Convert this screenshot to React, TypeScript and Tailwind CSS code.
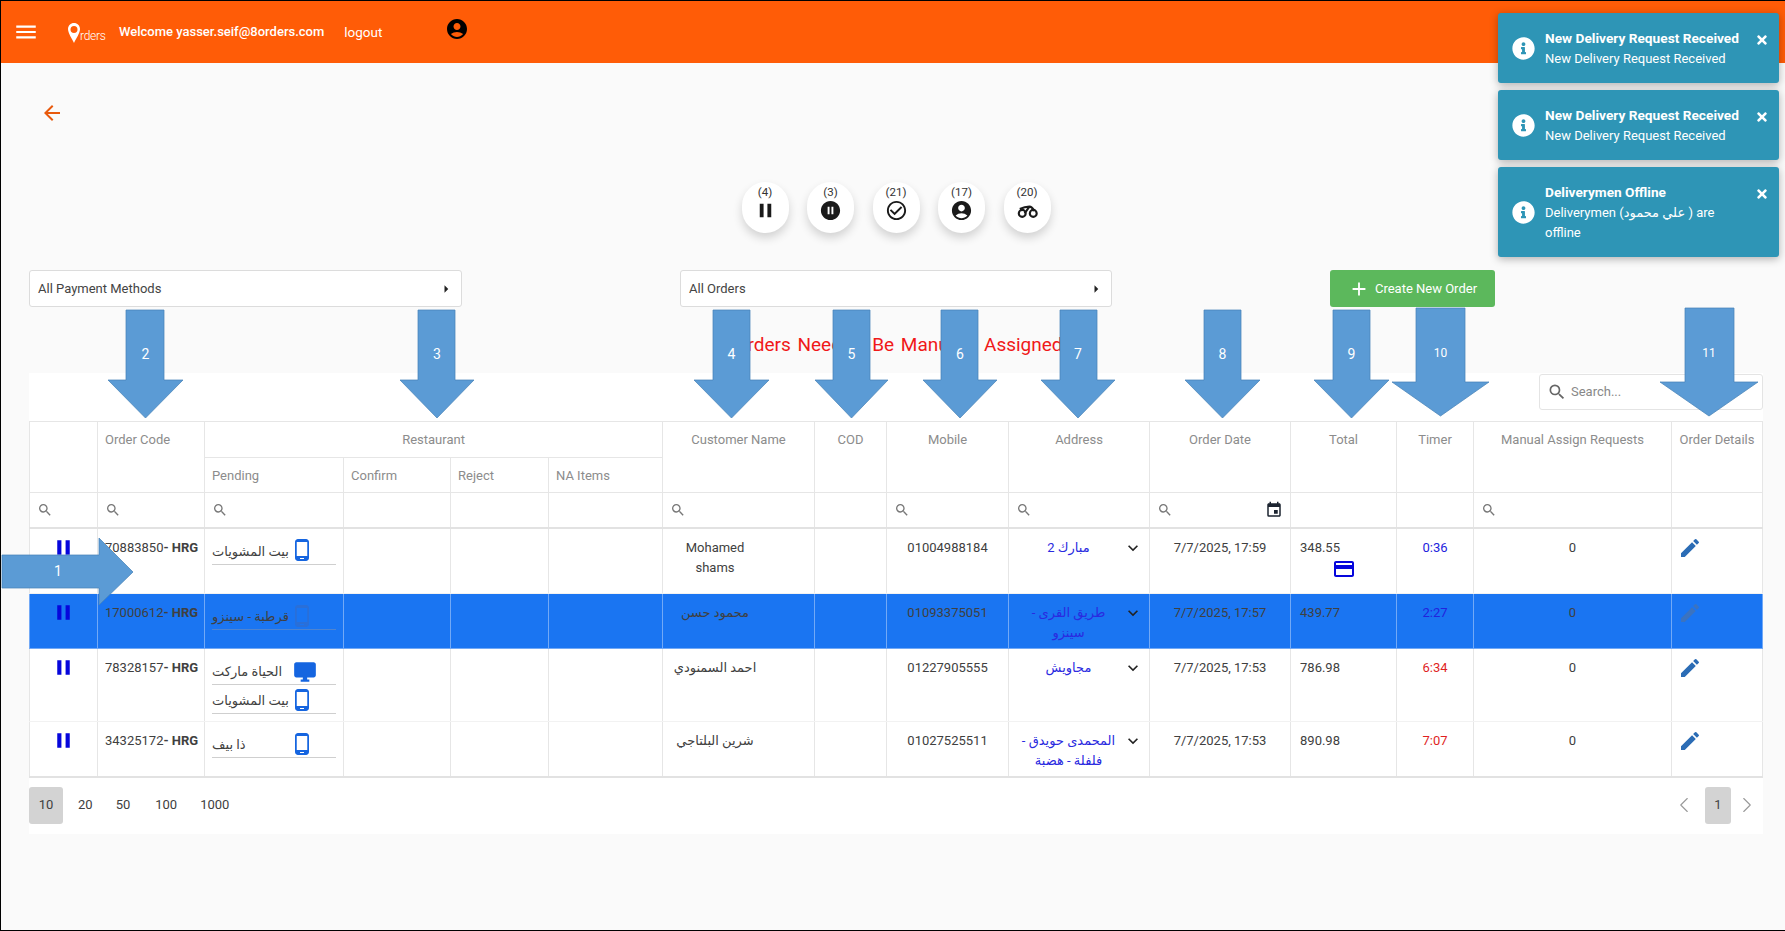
import { ChevronLeft, ChevronRight } from "lucide-react";
import { FaInfoCircle, FaTimes } from "react-icons/fa";
import {
  MdAccountCircle,
  MdAdd,
  MdArrowBack,
  MdArrowRight,
  MdCheckCircleOutline,
  MdCreditCard,
  MdDesktopWindows,
  MdEdit,
  MdEvent,
  MdKeyboardArrowDown,
  MdMenu,
  MdPause,
  MdPauseCircleFilled,
  MdPhoneAndroid,
  MdSearch,
} from "react-icons/md";

function BikeIcon({ className }: { className?: string }) {
  return (
    <svg viewBox="0 0 24 24" width="23" height="23" fill="none" stroke="currentColor" className={className}>
      <circle cx="6.500" cy="15" r="3.600" strokeWidth="2.200" />
      <circle cx="18" cy="15" r="3.600" strokeWidth="2.200" />
      <path d="M4 10.500c3-1.500 6-2.500 10-2.500 2 0 3.500 1.500 5 4.500M9 15l5-7" strokeWidth="2.200" />
    </svg>
  );
}

const statusButtons = [
  { count: "(4)", icon: MdPause },
  { count: "(3)", icon: MdPauseCircleFilled },
  { count: "(21)", icon: MdCheckCircleOutline },
  { count: "(17)", icon: MdAccountCircle },
  { count: "(20)", icon: BikeIcon },
];

const toasts = [
  { title: "New Delivery Request Received", body: "New Delivery Request Received" },
  { title: "New Delivery Request Received", body: "New Delivery Request Received" },
  { title: "Deliverymen Offline", body: "Deliverymen (علي محمود ) are offline" },
];

const orders = [
  {
    code: "70883850",
    restaurants: [{ name: "بيت المشويات", desktop: false }],
    customer: "Mohamed shams",
    mobile: "01004988184",
    address: "مبارك 2",
    date: "7/7/2025, 17:59",
    total: "348.55",
    card: true,
    timer: "0:36",
    late: false,
    rowClass: "h-[66px]",
  },
  {
    code: "17000612",
    restaurants: [{ name: "قرطبة - سينزو", desktop: false }],
    customer: "محمود حسن",
    mobile: "01093375051",
    address: "طريق القرى - سينزو",
    date: "7/7/2025, 17:57",
    total: "439.77",
    card: false,
    timer: "2:27",
    late: false,
    selected: true,
    rowClass: "h-[55px] bg-[#1a75f2]",
  },
  {
    code: "78328157",
    restaurants: [
      { name: "الحياة ماركت", desktop: true },
      { name: "بيت المشويات", desktop: false },
    ],
    customer: "احمد السمنودي",
    mobile: "01227905555",
    address: "مجاويش",
    date: "7/7/2025, 17:53",
    total: "786.98",
    card: false,
    timer: "6:34",
    late: true,
    rowClass: "h-[73px]",
  },
  {
    code: "34325172",
    restaurants: [{ name: "ذا بيف", desktop: false }],
    customer: "شرين البلتاجي",
    mobile: "01027525511",
    address: "المحمدى حويدق - فلفلة - هضبة",
    date: "7/7/2025, 17:53",
    total: "890.98",
    card: false,
    timer: "7:07",
    late: true,
    rowClass: "h-[55px]",
  },
];

// annotation arrows drawn over the screenshot: [label, shaft l, shaft r, head l, head r, top, neck, tip]
const downArrows: [string, number, number, number, number, number, number, number][] = [
  ["2", 126, 164, 108, 183, 310, 380, 418],
  ["3", 418, 455, 400, 474, 310, 380, 418],
  ["4", 713, 750, 694, 769, 310, 380, 418],
  ["5", 833, 870, 815, 888, 310, 380, 418],
  ["6", 941, 978, 923, 997, 310, 380, 418],
  ["7", 1060, 1097, 1041, 1115, 310, 380, 418],
  ["8", 1204, 1241, 1185, 1260, 310, 380, 418],
  ["9", 1333, 1370, 1314, 1389, 310, 380, 418],
  ["10", 1416, 1465, 1392, 1489, 308, 382, 416],
  ["11", 1685, 1734, 1660, 1758, 308, 382, 416],
];

const th = "border border-[#e6e6e6] font-normal text-[#8c8c8c] align-top pt-[8px] px-[7px]";
const filterCell = "border border-[#e6e6e6] border-b-2 border-b-[#e2e2e2] px-[7px] align-middle";

function SearchIcon() {
  return <MdSearch className="text-[16px] text-[#777]" />;
}

function Annotations() {
  return (
    <svg
      className="absolute -left-px -top-px pointer-events-none"
      width="1785"
      height="931"
      fontFamily="Roboto, sans-serif"
      fontSize="14"
    >
      {downArrows.map(([label, sl, sr, hl, hr, top, neck, tip]) => (
        <g key={label}>
          <polygon
            points={`${sl},${top} ${sr},${top} ${sr},${neck} ${hr},${neck} ${(hl + hr) / 2},${tip} ${hl},${neck} ${sl},${neck}`}
            fill="#5b9bd5"
            stroke="#4a84b8"
            strokeWidth="0.75"
          />
          <text x={(hl + hr) / 2} y={top < 310 ? 357 : 359} fill="#fff" textAnchor="middle" fontSize={top < 310 ? 12 : 14}>
            {label}
          </text>
        </g>
      ))}
      <polygon
        points="2,555 99,555 99,538 133,572 99,605 99,588 2,588"
        fill="#5b9bd5"
        stroke="#4a84b8"
        strokeWidth="0.75"
      />
      <text x="58" y="576" fill="#fff" textAnchor="middle">
        1
      </text>
    </svg>
  );
}

function Toasts() {
  return (
    <div className="absolute left-[1497px] top-[12px] w-[281px] flex flex-col gap-[7px] text-white text-[13px] leading-[20px]">
      {toasts.map((toast, i) => (
        <div
          key={i}
          className="relative flex items-center gap-[10px] bg-[#2e95b6] rounded-[3px] pl-[14px] pr-[30px] pt-[15px] pb-[14px] shadow-[0_2px_8px_rgba(0,0,0,0.3)]"
        >
          <FaInfoCircle className="text-[23px] shrink-0" />
          <div>
            <div className="font-bold text-[13.7px] leading-[21px]">{toast.title}</div>
            <div>{toast.body}</div>
          </div>
          <FaTimes className="absolute right-[10px] top-[20px] text-[14px]" />
        </div>
      ))}
    </div>
  );
}

function Select({ label, className }: { label: string; className: string }) {
  return (
    <div
      className={`flex items-center justify-between h-[37px] bg-white border border-[#dcdcdc] rounded-[3px] pl-2 pr-[6px] text-[#444] ${className}`}
    >
      <span>{label}</span>
      <MdArrowRight className="text-[18px] text-[#222]" />
    </div>
  );
}

export default function App() {
  return (
    <div className="relative w-[1785px] h-[931px] overflow-hidden bg-[#fafafa] border-l border-y border-black font-['Roboto','DejaVu_Sans',sans-serif] text-[13px] text-[#404040]">
      <header className="flex items-center h-[62px] bg-[#ff5c07] text-white">
        <MdMenu className="text-[26px] ml-[12px]" />
        <div className="flex items-end ml-[29px] w-[37px] h-[21px]">
          <svg width="12" height="20" viewBox="0 0 12 20" className="shrink-0">
            <path d="M6 0C2.700 0 0 2.600 0 6c0 4.200 4 9.500 6 14 2-4.500 6-9.800 6-14 0-3.400-2.700-6-6-6zm0 3a3 3 0 0 1 0 7 3 3 0 0 1 0-7z" fill="#fff" />
          </svg>
          <span className="text-[12px] leading-[14px] font-light tracking-[-0.3px]">rders</span>
        </div>
        <span className="ml-[14px] text-[13px] font-medium">Welcome yasser.seif@8orders.com</span>
        <span className="ml-[20px] text-[13.5px]">logout</span>
        <MdAccountCircle className="ml-[63px] -mt-[7px] text-[24px] text-black" />
      </header>

      <div className="pl-[28px] pr-[22px]">
        <div className="pt-[38px] pl-[11px]">
          <MdArrowBack className="text-[24px] text-[#e8590c]" />
        </div>

        <div className="flex justify-center gap-[18.500px] mt-[57px]">
          {statusButtons.map((btn) => (
            <div
              key={btn.count}
              className="flex flex-col items-center w-[47px] h-[51px] pt-[4px] bg-white rounded-full shadow-[0_5px_10px_rgba(0,0,0,0.16)] text-[11.500px] leading-[13px] text-[#333]"
            >
              <span>{btn.count}</span>
              <btn.icon className="text-[23px] text-[#1a1a1a]" />
            </div>
          ))}
        </div>

        <div className="flex mt-[37px]">
          <Select label="All Payment Methods" className="w-[433px]" />
          <Select label="All Orders" className="w-[432px] ml-[218px]" />
          <button className="flex items-center justify-center gap-[5px] w-[165px] h-[37px] ml-[218px] bg-[#5cb85c] rounded-[3px] text-white">
            <MdAdd className="text-[22px]" />
            Create New Order
          </button>
        </div>

        <div className="flex items-center justify-center h-[66px] pt-[10px] pl-[5px] text-[19px] [word-spacing:2px] text-[#f01818]">
          Orders Need to Be Manually Assigned
        </div>

        <section className="bg-white">
          <div className="flex justify-end h-[48px] pt-[1px]">
            <div className="flex items-center gap-[4px] w-[224px] h-[36px] pl-[7px] border border-[#e4e4e4] rounded-[3px] text-[#888]">
              <MdSearch className="text-[20px] text-[#666]" />
              Search...
            </div>
          </div>

          <table className="table-fixed border-collapse w-[1733px]">
            <colgroup>
              <col className="w-[68px]" />
              <col className="w-[107px]" />
              <col className="w-[139px]" />
              <col className="w-[107px]" />
              <col className="w-[98px]" />
              <col className="w-[114px]" />
              <col className="w-[152px]" />
              <col className="w-[72px]" />
              <col className="w-[122px]" />
              <col className="w-[141px]" />
              <col className="w-[141px]" />
              <col className="w-[106px]" />
              <col className="w-[77px]" />
              <col className="w-[198px]" />
              <col className="w-[91px]" />
            </colgroup>
            <thead>
              <tr className="h-[36px]">
                <th rowSpan={2} className={th}></th>
                <th rowSpan={2} className={`${th} text-left`}>Order Code</th>
                <th colSpan={4} className={`${th} text-center`}>Restaurant</th>
                <th rowSpan={2} className={`${th} text-center`}>Customer Name</th>
                <th rowSpan={2} className={`${th} text-center`}>COD</th>
                <th rowSpan={2} className={`${th} text-center`}>Mobile</th>
                <th rowSpan={2} className={`${th} text-center`}>Address</th>
                <th rowSpan={2} className={`${th} text-center`}>Order Date</th>
                <th rowSpan={2} className={`${th} text-center`}>Total</th>
                <th rowSpan={2} className={`${th} text-center`}>Timer</th>
                <th rowSpan={2} className={`${th} text-center`}>Manual Assign Requests</th>
                <th rowSpan={2} className={`${th} text-center !px-0`}>Order Details</th>
              </tr>
              <tr className="h-[35px]">
                <th className={`${th} text-left`}>Pending</th>
                <th className={`${th} text-left`}>Confirm</th>
                <th className={`${th} text-left`}>Reject</th>
                <th className={`${th} text-left`}>NA Items</th>
              </tr>
              <tr className="h-[35px]">
                <td className={filterCell}><SearchIcon /></td>
                <td className={filterCell}><SearchIcon /></td>
                <td className={filterCell}><SearchIcon /></td>
                <td className={filterCell}></td>
                <td className={filterCell}></td>
                <td className={filterCell}></td>
                <td className={filterCell}><SearchIcon /></td>
                <td className={filterCell}></td>
                <td className={filterCell}><SearchIcon /></td>
                <td className={filterCell}><SearchIcon /></td>
                <td className={filterCell}>
                  <div className="flex items-center justify-between">
                    <SearchIcon />
                    <MdEvent className="text-[18px] text-[#1c2430]" />
                  </div>
                </td>
                <td className={filterCell}></td>
                <td className={filterCell}></td>
                <td className={filterCell}><SearchIcon /></td>
                <td className={filterCell}></td>
              </tr>
            </thead>
            <tbody>
              {orders.map((order) => {
                const cell = order.selected
                  ? "border border-[#72a9f6] align-top pt-[9px] px-[7px] leading-[20px]"
                  : "border-x border-x-[#e6e6e6] border-b border-b-[#f2f2f2] align-top pt-[9px] px-[7px] leading-[20px]";
                return (
                  <tr key={order.code} className={order.rowClass}>
                    <td className={cell}>
                      <MdPause className="mx-auto text-[25px] -mt-[3px] text-[#0606dc]" />
                    </td>
                    <td className={`${cell} whitespace-nowrap !pr-0`}>
                      {order.code}
                      <b className="font-bold">- HRG</b>
                    </td>
                    <td className={`${cell} !pt-[8px]`}>
                      {order.restaurants.map((r) => (
                        <div
                          key={r.name}
                          className={`flex items-center justify-between h-[28px] mb-[1px] border-b whitespace-nowrap ${order.selected ? "border-[#4f84d0]" : "border-[#cfcfcf]"}`}
                        >
                          <span className="mt-[3px]">{r.name}</span>
                          {r.desktop ? (
                            <MdDesktopWindows className="shrink-0 text-[26px] text-[#1565e0] mr-[18px] mt-[2px]" />
                          ) : (
                            <MdPhoneAndroid
                              className={`shrink-0 text-[24px] mr-[22px] ${order.selected ? "text-[#2a6fd8]" : "text-[#1565e0]"}`}
                            />
                          )}
                        </div>
                      ))}
                    </td>
                    <td className={cell}></td>
                    <td className={cell}></td>
                    <td className={cell}></td>
                    <td className={cell}>
                      <div className="w-[90px] text-center">{order.customer}</div>
                    </td>
                    <td className={cell}></td>
                    <td className={`${cell} text-center`}>{order.mobile}</td>
                    <td className={`${cell} !pr-[6px]`}>
                      <div className="flex items-start">
                        <div dir="rtl" className="flex-1 text-center text-[#2a2ae0]">
                          {order.address}
                        </div>
                        <MdKeyboardArrowDown className="shrink-0 ml-[2px] text-[20px] text-[#222]" />
                      </div>
                    </td>
                    <td className={`${cell} text-center`}>{order.date}</td>
                    <td className={cell}>
                      <div className="pl-[2px]">{order.total}</div>
                      {order.card && <MdCreditCard className="mx-auto text-[24px] -mt-[1px] text-[#0606dc]" />}
                    </td>
                    <td className={`${cell} text-center ${order.late ? "text-[#e01f1f]" : "text-[#2222dd]"}`}>
                      {order.timer}
                    </td>
                    <td className={`${cell} text-center`}>0</td>
                    <td className={cell}>
                      <MdEdit
                        className={`text-[24px] -ml-[1px] -mt-[2px] ${order.selected ? "text-[#3b73c0]" : "text-[#2b6cb5]"}`}
                      />
                    </td>
                  </tr>
                );
              })}
              <tr className="h-0">
                <td colSpan={15} className="border-t-2 border-t-[#e2e2e2]"></td>
              </tr>
            </tbody>
          </table>

          <div className="flex items-center justify-between h-[56px] pb-[1px]">
            <div className="flex items-center">
              <span className="flex items-center justify-center w-[34px] h-[37px] bg-[#d3d3d3] rounded-[3px]">10</span>
              <span className="ml-[15px]">20</span>
              <span className="ml-[23px]">50</span>
              <span className="ml-[25px]">100</span>
              <span className="ml-[23px]">1000</span>
            </div>
            <div className="flex items-center text-[#999]">
              <ChevronLeft strokeWidth={1} size={26} />
              <span className="flex items-center justify-center w-[26px] h-[37px] ml-[8px] mr-[3px] bg-[#d3d3d3] rounded-[3px] text-[#444]">
                1
              </span>
              <ChevronRight strokeWidth={1} size={26} className="mr-[3px]" />
            </div>
          </div>
        </section>
      </div>

      <Toasts />
      <Annotations />
    </div>
  );
}
